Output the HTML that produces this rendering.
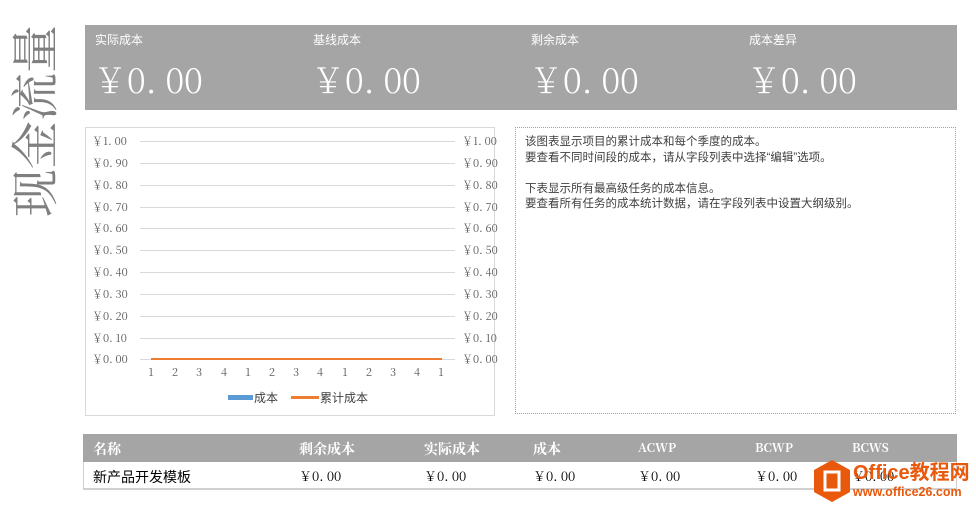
<!DOCTYPE html>
<html><head><meta charset="utf-8"><style>
body{margin:0;width:976px;height:509px;background:#fff;position:relative;overflow:hidden;font-family:"Liberation Sans","Noto Sans CJK SC",sans-serif;}
.abs{position:absolute;}
.title{left:-66px;top:96px;width:196px;height:50px;transform:rotate(-90deg);font-family:"Noto Serif CJK SC",serif;font-size:48px;color:#7f7f7f;line-height:50px;white-space:nowrap;text-align:center}
.band{left:85px;top:25px;width:872px;height:85px;background:#a5a5a5;}
.lab{color:#fff;font-size:12px;top:6px;}
.val{color:#fff;font-family:"Noto Serif CJK SC",serif;font-size:34px;top:29px;letter-spacing:0;font-weight:300}
.chart{left:85px;top:127px;width:408px;height:287px;border:1px solid #d9d9d9;}
.note{left:515px;top:127px;width:441px;height:287px;border:1px dotted #a0a0a0;font-size:11.5px;color:#404040;line-height:15.5px;padding:7px 0 0 9px;box-sizing:border-box}
.th{left:83px;top:434px;width:874px;height:28px;background:#a5a5a5;}
.th span{position:absolute;top:5px;color:#fff;font-weight:bold;font-size:14px;font-family:"Noto Serif CJK SC",serif}
.tr{left:83px;top:462px;width:874px;height:28px;border-bottom:2px solid #d0d0d0;border-left:1px solid #d0d0d0;border-right:1px solid #d0d0d0;box-sizing:border-box}
.tr span{position:absolute;top:4px;font-size:13px;color:#000;font-family:"Noto Serif CJK SC",serif;letter-spacing:0}
</style></head><body>
<div class="abs title">现金流量</div>
<div class="abs band">
<span class="abs lab" style="left:10px">实际成本</span>
<span class="abs lab" style="left:228px">基线成本</span>
<span class="abs lab" style="left:446px">剩余成本</span>
<span class="abs lab" style="left:664px">成本差异</span>
<span class="abs val" style="left:8px">￥0. 00</span>
<span class="abs val" style="left:226px">￥0. 00</span>
<span class="abs val" style="left:444px">￥0. 00</span>
<span class="abs val" style="left:662px">￥0. 00</span>
</div>
<div class="abs chart"></div>
<svg class="abs" style="left:0;top:0" width="976" height="509">
<g stroke="#d9d9d9" stroke-width="1">
<line x1="140" x2="455" y1="141.5" y2="141.5"/><line x1="140" x2="455" y1="163.5" y2="163.5"/><line x1="140" x2="455" y1="185.5" y2="185.5"/><line x1="140" x2="455" y1="207.5" y2="207.5"/><line x1="140" x2="455" y1="228.5" y2="228.5"/><line x1="140" x2="455" y1="250.5" y2="250.5"/><line x1="140" x2="455" y1="272.5" y2="272.5"/><line x1="140" x2="455" y1="294.5" y2="294.5"/><line x1="140" x2="455" y1="316.5" y2="316.5"/><line x1="140" x2="455" y1="338.5" y2="338.5"/><line x1="140" x2="455" y1="359.5" y2="359.5"/>
</g>
<line x1="151" x2="442" y1="359" y2="359" stroke="#ed7d31" stroke-width="2"/>
<g fill="#595959" font-size="11" font-family="Noto Serif CJK SC, serif">
<text x="92" y="145">￥1. 00</text><text x="92" y="167">￥0. 90</text><text x="92" y="189">￥0. 80</text><text x="92" y="211">￥0. 70</text><text x="92" y="232">￥0. 60</text><text x="92" y="254">￥0. 50</text><text x="92" y="276">￥0. 40</text><text x="92" y="298">￥0. 30</text><text x="92" y="320">￥0. 20</text><text x="92" y="342">￥0. 10</text><text x="92" y="363">￥0. 00</text>
<text x="462" y="145">￥1. 00</text><text x="462" y="167">￥0. 90</text><text x="462" y="189">￥0. 80</text><text x="462" y="211">￥0. 70</text><text x="462" y="232">￥0. 60</text><text x="462" y="254">￥0. 50</text><text x="462" y="276">￥0. 40</text><text x="462" y="298">￥0. 30</text><text x="462" y="320">￥0. 20</text><text x="462" y="342">￥0. 10</text><text x="462" y="363">￥0. 00</text>
<g text-anchor="middle">
<text x="151" y="376">1</text><text x="175" y="376">2</text><text x="199" y="376">3</text><text x="224" y="376">4</text><text x="248" y="376">1</text><text x="272" y="376">2</text><text x="296" y="376">3</text><text x="320" y="376">4</text><text x="345" y="376">1</text><text x="369" y="376">2</text><text x="393" y="376">3</text><text x="417" y="376">4</text><text x="441" y="376">1</text>
</g>
</g>
<rect x="228" y="395" width="25" height="5" fill="#5b9bd5"/>
<line x1="291" x2="319" y1="397.5" y2="397.5" stroke="#ed7d31" stroke-width="3"/>
<text x="254" y="402" font-size="12" fill="#404040" font-family="Liberation Sans, Noto Sans CJK SC, sans-serif">成本</text>
<text x="320" y="402" font-size="12" fill="#404040" font-family="Liberation Sans, Noto Sans CJK SC, sans-serif">累计成本</text>
</svg>
<div class="abs note">该图表显示项目的累计成本和每个季度的成本。<br>要查看不同时间段的成本，请从字段列表中选择“编辑”选项。<br><br>下表显示所有最高级任务的成本信息。<br>要查看所有任务的成本统计数据，请在字段列表中设置大纲级别。</div>
<div class="abs th">
<span style="left:10px">名称</span><span style="left:216px">剩余成本</span><span style="left:341px">实际成本</span><span style="left:450px">成本</span><span style="left:555px;font-size:12px">ACWP</span><span style="left:672px;font-size:12px">BCWP</span><span style="left:769px;font-size:12px">BCWS</span>
</div>
<div class="abs tr">
<span style="left:9px;font-family:'Liberation Sans','Noto Sans CJK SC',sans-serif;top:5px;font-size:14px">新产品开发模板</span><span style="left:215px">￥0. 00</span><span style="left:340px">￥0. 00</span><span style="left:449px">￥0. 00</span><span style="left:554px">￥0. 00</span><span style="left:671px">￥0. 00</span><span style="left:768px">￥0. 00</span>
</div>
<svg class="abs" style="left:812px;top:459px" width="40" height="44"><polygon points="20,1 38,11 38,33 20,43 2,33 2,11" fill="#e8590c"/><rect x="13" y="13" width="14" height="18" fill="none" stroke="#fff" stroke-width="3"/></svg>
<div class="abs" style="left:853px;top:462px;font-size:20px;font-weight:bold;color:#e8590c;font-family:'Liberation Sans','Noto Sans CJK SC',sans-serif;line-height:22px">Office教程网</div>
<div class="abs" style="left:853px;top:485px;font-size:12.5px;font-weight:bold;color:#e8590c;line-height:14px">www.office26.com</div>
</body></html>
